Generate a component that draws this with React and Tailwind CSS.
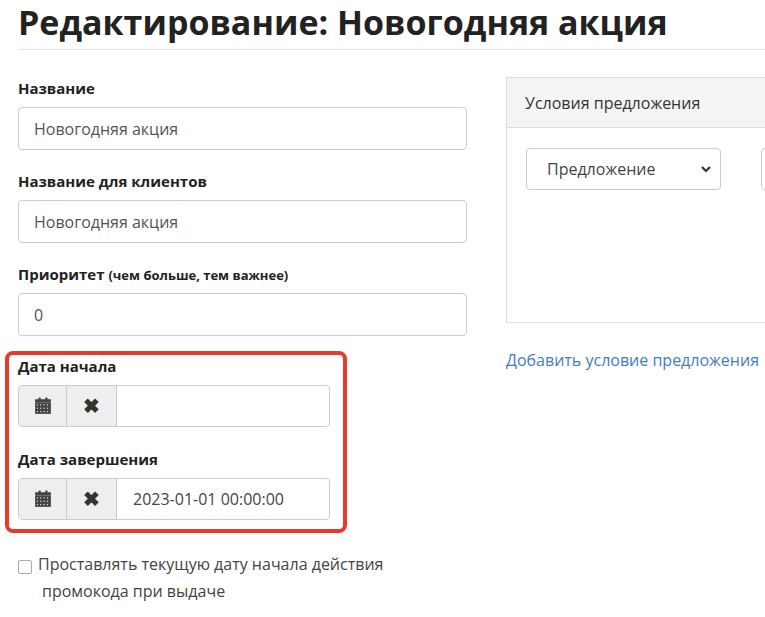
export default function App() {
  const label = "block font-bold text-[15px] text-[#222] h-[20px] leading-[20px]";
  const input = "w-[449px] h-[43px] border border-[#ccc] rounded-[4px] px-[15px] flex items-center text-[16px] text-[#555]";
  const Cal = () => (
    <svg width="18" height="18" viewBox="0 0 16 16" fill="#444">
      <rect x="1" y="2" width="14" height="3" />
      <rect x="4" y="0.5" width="2" height="3" />
      <rect x="10" y="0.5" width="2" height="3" />
      <rect x="1" y="5" width="14" height="10" />
      {[6.5, 9.5, 12.5].map((y) => [2.5, 5.5, 8.5, 11.5].map((x) => <rect key={x + "-" + y} x={x} y={y} width="1" height="1" fill="#eee" />))}
    </svg>
  );
  const DateField = ({ value }) => (
    <div className="flex w-[312px] h-[42px] border border-[#ccc] rounded-[4px] overflow-hidden">
      <div className="w-[48px] bg-[#eee] border-r border-[#ccc] flex items-center justify-center"><Cal /></div>
      <div className="w-[50px] bg-[#eee] border-r border-[#ccc] flex items-center justify-center text-[#333] text-[20px] font-bold">✖</div>
      <div className="flex-1 flex items-center px-[16px] text-[16px] text-[#444]">{value}</div>
    </div>
  );
  return (
    <div className="w-[765px] h-[617px] overflow-hidden bg-white" style={{ fontFamily: '"Open Sans", "Liberation Sans", sans-serif' }}>
      <div className="w-[1000px] pl-[18px]">
        <h1 className="text-[34px] font-bold text-[#222] leading-[44px] w-[747px]">Редактирование: Новогодняя акция</h1>
        <div className="w-[747px] border-b border-[#e5e5e5] mt-[5px]" />
        <div className="flex gap-[39px] mt-[28px]">
          <div className="w-[449px]">
            <label className={label}>Название</label>
            <div className={`${input} mt-[9px]`}>Новогодняя акция</div>
            <label className={`${label} mt-[21px]`}>Название для клиентов</label>
            <div className={`${input} mt-[9px]`}>Новогодняя акция</div>
            <label className={`${label} mt-[21px]`}>Приоритет <span className="text-[13px]">(чем больше, тем важнее)</span></label>
            <div className={`${input} mt-[9px]`}>0</div>
            <div className="-ml-[13px] mt-[15px] w-[342px] h-[182px] border-[4px] border-[#e53a2f] rounded-[8px] pl-[9px] pt-[1px]">
              <label className={label}>Дата начала</label>
              <div className="mt-[9px]"><DateField value="" /></div>
              <label className={`${label} mt-[22px]`}>Дата завершения</label>
              <div className="mt-[9px]"><DateField value="2023-01-01 00:00:00" /></div>
            </div>
            <div className="mt-[26px] flex text-[16px] text-[#444] leading-[27px]">
              <div className="w-[14px] h-[14px] border border-[#aaa] rounded-[2px] mt-[1px] mr-[6px] shrink-0" />
              <div className="-mt-[8px]">Проставлять текущую дату начала действия<br /><span className="pl-[4px]">промокода при выдаче</span></div>
            </div>
          </div>
          <div>
            <div className="w-[400px] h-[246px] border border-[#ddd] -mt-[1px]">
              <div className="h-[50px] bg-[#f4f4f4] border-b border-[#ddd] flex items-center px-[18px] text-[16px] text-[#333]">Условия предложения</div>
              <div className="flex pt-[20px] pl-[19px] gap-[40px]">
                <div className="w-[195px] h-[42px] border border-[#ccc] rounded-[4px] flex items-center justify-between pl-[20px] pr-[8px] text-[16px] text-[#444]">
                  Предложение
                  <svg width="12" height="12" viewBox="0 0 12 12"><path d="M2 4l4 4 4-4" stroke="#333" strokeWidth="2.2" fill="none" /></svg>
                </div>
                <div>
                  <div className="w-[100px] h-[42px] border border-[#ccc] rounded-[4px]" />
                </div>
              </div>
            </div>
            <div className="mt-[25px] text-[16px] text-[#3f7ec0] whitespace-nowrap">Добавить условие предложения</div>
          </div>
        </div>
      </div>
    </div>
  );
}
